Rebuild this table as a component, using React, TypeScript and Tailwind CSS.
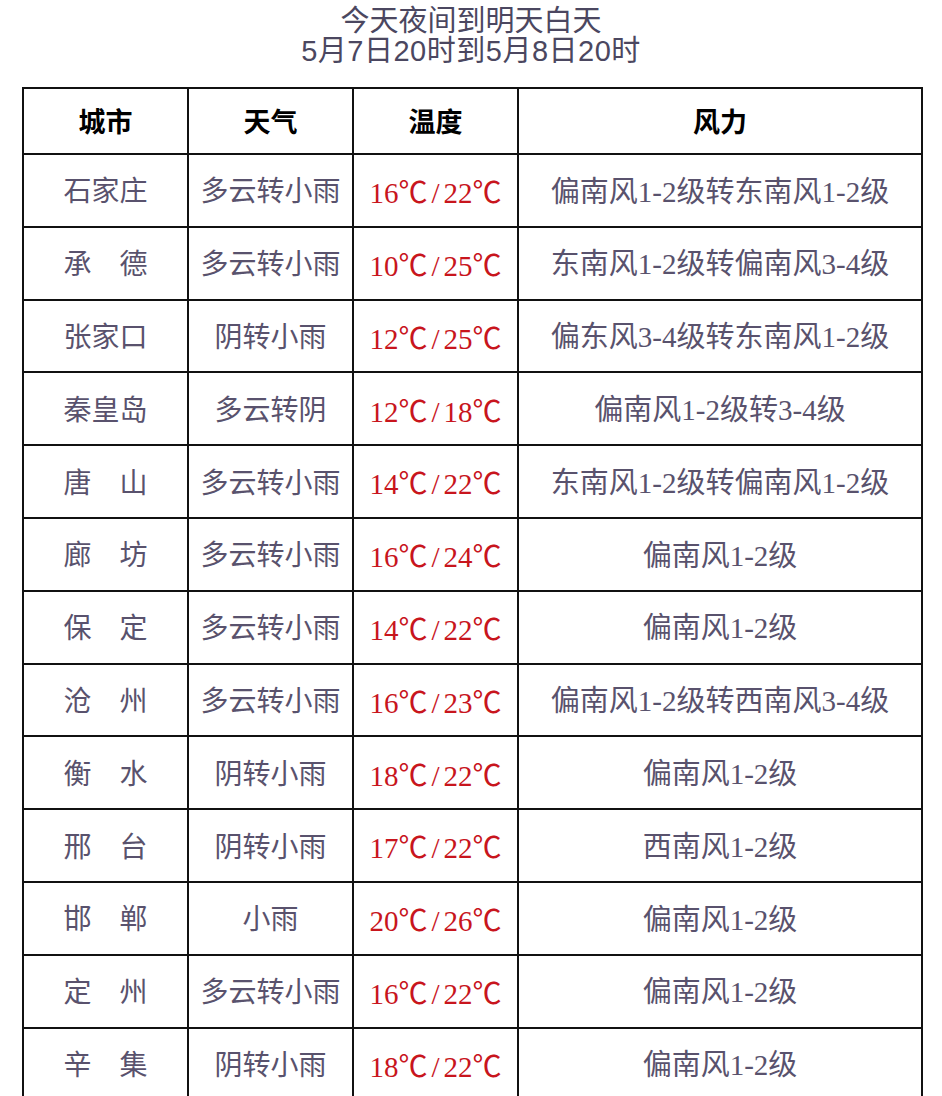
const rows: [string, string, string, string][] = [
  ["石家庄", "多云转小雨", "16℃/22℃", "偏南风1-2级转东南风1-2级"],
  ["承　德", "多云转小雨", "10℃/25℃", "东南风1-2级转偏南风3-4级"],
  ["张家口", "阴转小雨", "12℃/25℃", "偏东风3-4级转东南风1-2级"],
  ["秦皇岛", "多云转阴", "12℃/18℃", "偏南风1-2级转3-4级"],
  ["唐　山", "多云转小雨", "14℃/22℃", "东南风1-2级转偏南风1-2级"],
  ["廊　坊", "多云转小雨", "16℃/24℃", "偏南风1-2级"],
  ["保　定", "多云转小雨", "14℃/22℃", "偏南风1-2级"],
  ["沧　州", "多云转小雨", "16℃/23℃", "偏南风1-2级转西南风3-4级"],
  ["衡　水", "阴转小雨", "18℃/22℃", "偏南风1-2级"],
  ["邢　台", "阴转小雨", "17℃/22℃", "西南风1-2级"],
  ["邯　郸", "小雨", "20℃/26℃", "偏南风1-2级"],
  ["定　州", "多云转小雨", "16℃/22℃", "偏南风1-2级"],
  ["辛　集", "阴转小雨", "18℃/22℃", "偏南风1-2级"],
];

const serif = "font-['Liberation_Serif','Noto_Sans_CJK_SC',serif]";
const cjk = "font-['Noto_Sans_CJK_SC',sans-serif]";

// 温度：℃ 用中文字体显示成全角
function Temp({ value }: { value: string }) {
  const [lo, hi] = value.replace(/℃/g, "").split("/");
  return (
    <span>
      {lo}
      <span className={cjk}>℃</span>
      <span className="mx-[4px]">/</span>
      {hi}
      <span className={cjk}>℃</span>
    </span>
  );
}

const cell = "border-2 border-[#111] pt-[4px] text-center align-middle whitespace-nowrap";

export default function App() {
  return (
    <div className="w-[942px] h-[1096px] overflow-hidden bg-white">
      {/* 标题 */}
      <div className="pt-[6px] text-center text-[29px] leading-[30px] text-[#4b4760] font-['Liberation_Sans','Noto_Sans_CJK_SC',sans-serif]">
        <div>今天夜间到明天白天</div>
        <div className="tracking-[0.5px]">5月7日20时到5月8日20时</div>
      </div>

      <table className={`ml-[22px] mt-[21px] w-[901px] table-fixed border-collapse ${serif}`}>
        <colgroup>
          <col className="w-[165px]" />
          <col className="w-[165px]" />
          <col className="w-[165px]" />
          <col />
        </colgroup>
        <thead>
          <tr className="h-[66px]">
            {["城市", "天气", "温度", "风力"].map((h) => (
              <th
                key={h}
                className="border-2 border-[#111] pt-[5px] text-center align-middle text-[27px] font-bold text-black"
              >
                {h}
              </th>
            ))}
          </tr>
        </thead>
        <tbody>
          {rows.map(([city, weather, temp, wind]) => (
            <tr key={city} className="h-[72.8px]">
              <td className={`${cell} text-[28px] text-[#59526d]`}>{city}</td>
              <td className={`${cell} text-[28px] text-[#59526d]`}>{weather}</td>
              <td className={`${cell} text-[29px] text-[#c8151d]`}>
                <Temp value={temp} />
              </td>
              <td className={`${cell} text-[29px] text-[#59526d]`}>{wind}</td>
            </tr>
          ))}
        </tbody>
      </table>
    </div>
  );
}
